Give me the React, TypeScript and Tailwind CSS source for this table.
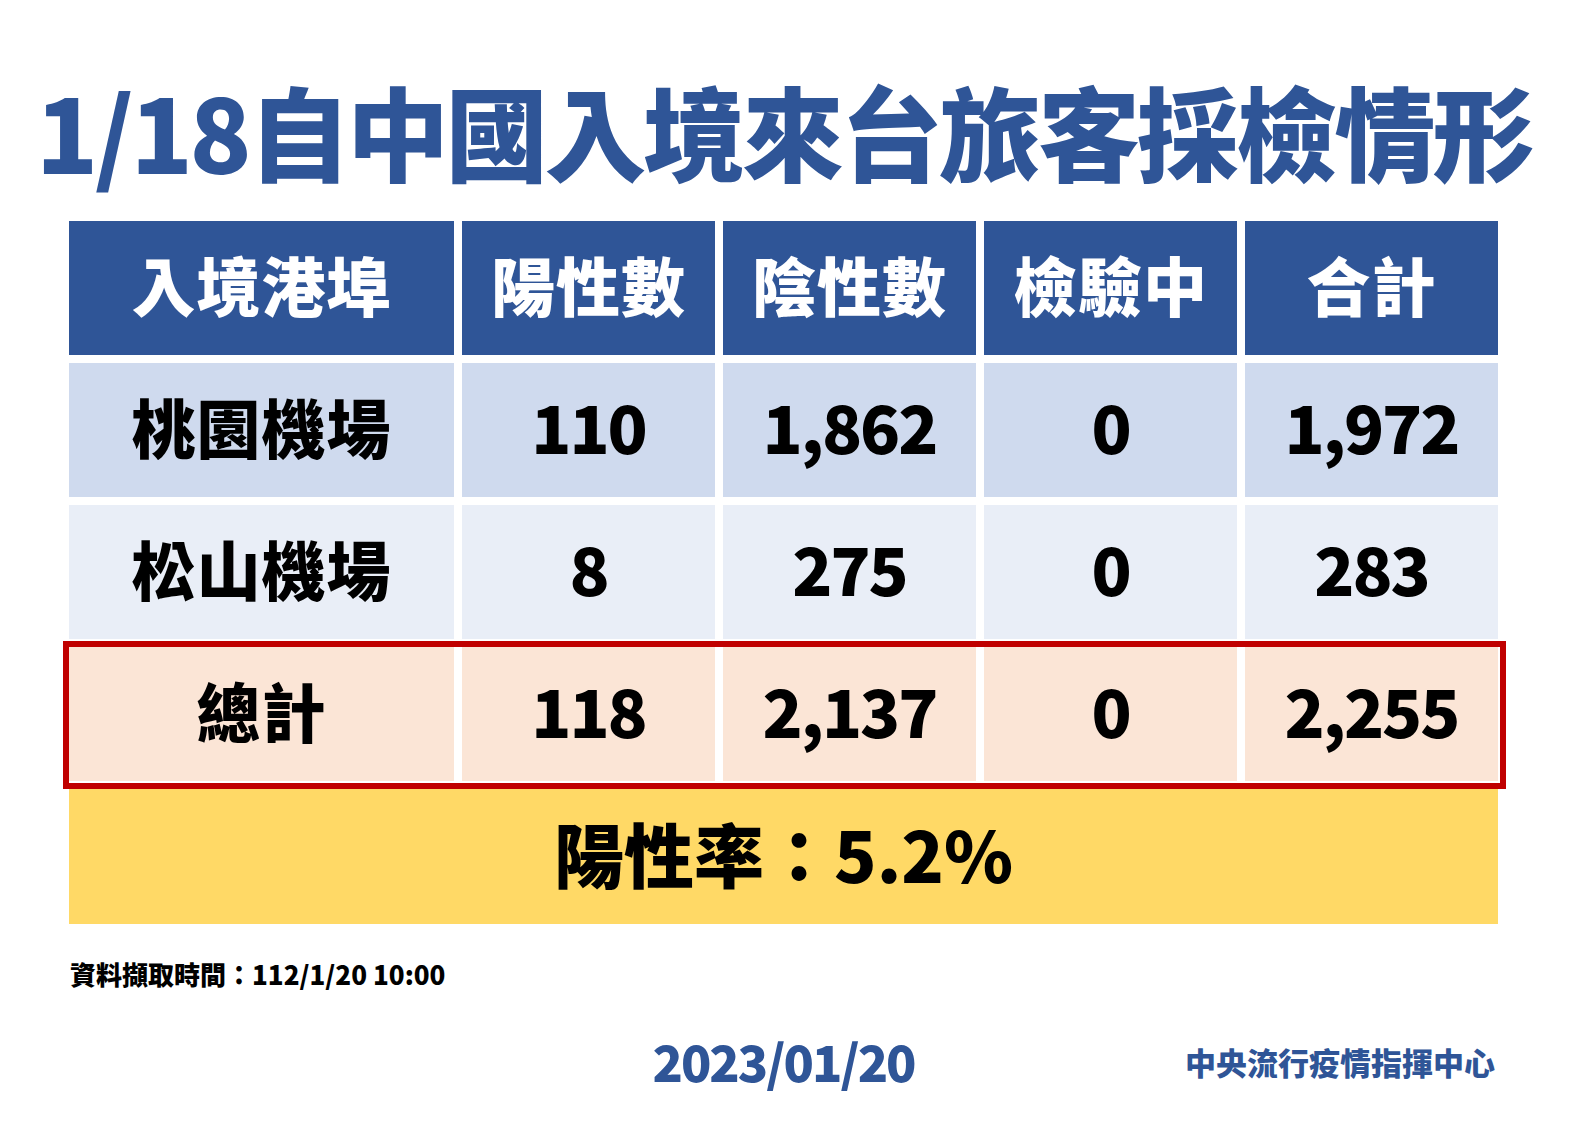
const FONT = { fontFamily: '"Noto Sans CJK TC", "Noto Sans", sans-serif' };

const HEADERS = ['入境港埠', '陽性數', '陰性數', '檢驗中', '合計'];

const ROWS = [
  { name: '桃園機場', values: ['110', '1,862', '0', '1,972'], bg: 'bg-[#cfdaee]' },
  { name: '松山機場', values: ['8', '275', '0', '283'], bg: 'bg-[#e9eef7]' },
];

const TOTAL = { name: '總計', values: ['118', '2,137', '0', '2,255'] };

const COLS = 'grid grid-cols-[385px_253px_253px_253px_253px] gap-x-[8px]';

function Cell({ children, bg, num }: { children: React.ReactNode; bg: string; num?: boolean }) {
  return (
    <div className={`${bg} h-[134px] pb-[10px] flex items-center justify-center`}>
      <span
        className={`${num ? 'text-[66px] tracking-[-2px]' : 'text-[64px] tracking-[1px]'} font-black leading-none text-black`}
      >
        {children}
      </span>
    </div>
  );
}

export default function App() {
  return (
    <div className="w-[1587px] h-[1123px] bg-white overflow-hidden" style={FONT}>
      <h1 className="mt-[78px] h-[106px] leading-[104px] pl-[36px] text-[102px] font-black text-[#2f5597] tracking-[-3.3px] whitespace-nowrap">
        1/18自中國入境來台旅客採檢情形
      </h1>

      <div className="mt-[37px] ml-[69px] w-[1429px] flex flex-col gap-y-[8px]">
        {/* Header */}
        <div className={COLS}>
          {HEADERS.map((h) => (
            <div key={h} className="bg-[#2f5597] h-[134px] pb-[10px] flex items-center justify-center">
              <span className="text-[64px] font-black leading-none text-white tracking-[1px]">{h}</span>
            </div>
          ))}
        </div>

        {ROWS.map((r) => (
          <div key={r.name} className={COLS}>
            <Cell bg={r.bg}>{r.name}</Cell>
            {r.values.map((v, i) => (
              <Cell key={i} bg={r.bg} num>
                {v}
              </Cell>
            ))}
          </div>
        ))}

        {/* Total row with red outline */}
        <div className="relative">
          <div className={COLS}>
            <Cell bg="bg-[#fbe5d6]">{TOTAL.name}</Cell>
            {TOTAL.values.map((v, i) => (
              <Cell key={i} bg="bg-[#fbe5d6]" num>
                {v}
              </Cell>
            ))}
          </div>
          <div className="absolute -left-[6px] -right-[8px] -top-[6px] -bottom-[8px] border-[6px] border-[#c00000] pointer-events-none" />
        </div>

        <div className="bg-[#ffd966] h-[135px] pb-[8px] flex items-center justify-center">
          <span className="text-[70px] font-black leading-none text-black">陽性率：5.2%</span>
        </div>
      </div>

      <p className="mt-[37px] ml-[70px] h-[26px] leading-[26px] text-[26px] font-black text-black whitespace-nowrap">
        資料擷取時間：112/1/20 10:00
      </p>

      <div className="mt-[47px] ml-[69px] w-[1429px] relative h-[52px] flex items-center justify-center">
        <span className="text-[50px] font-black leading-none text-[#2f5597] tracking-[-2px]">2023/01/20</span>
        <span className="absolute right-[3px] top-[12px] text-[31px] font-black leading-none text-[#2f5597]">
          中央流行疫情指揮中心
        </span>
      </div>
    </div>
  );
}
